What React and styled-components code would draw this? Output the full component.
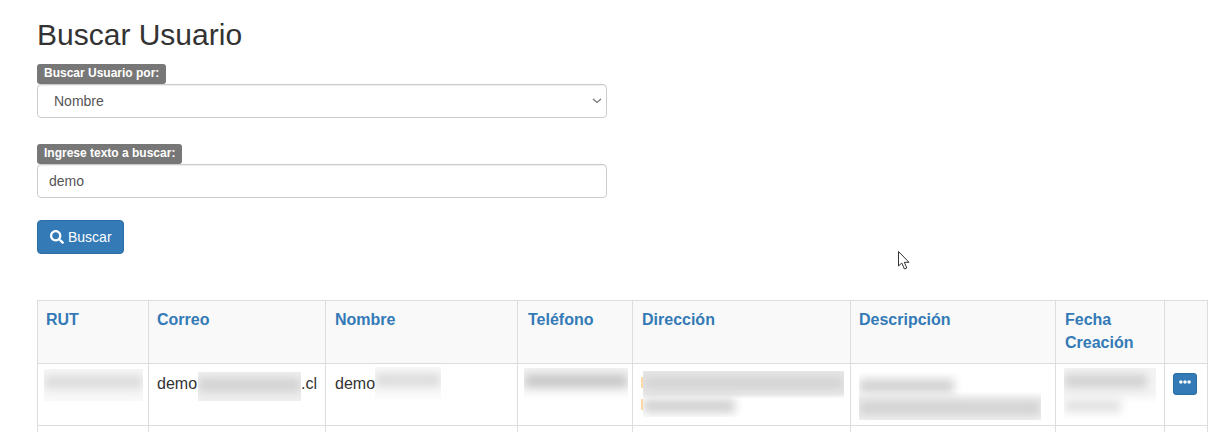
import styled, { createGlobalStyle } from "styled-components";
import { FaSearch, FaEllipsisH } from "react-icons/fa";

const GlobalStyle = createGlobalStyle`
  html, body {
    margin: 0;
    height: 432px;
    overflow: hidden;
    background: #fff;
  }
  body {
    font-family: "Liberation Sans", Arial, sans-serif;
    font-size: 14px;
    line-height: 1.42857;
    color: #333;
  }
  * {
    box-sizing: border-box;
  }
`;

const Page = styled.div`
  position: relative;
  height: 432px;
  padding: 18px 0 0 37px;
  overflow: hidden;
`;

const Title = styled.h2`
  margin: 0 0 13px;
  font-size: 30px;
  font-weight: 500;
  line-height: 33px;
  color: #333;
`;

const Form = styled.form`
  width: 570px;
`;

const Group = styled.div`
  margin-bottom: ${(p) => p.$gap}px;
`;

const Label = styled.label`
  display: table;
  height: 20px;
  padding: 1px 7px 0;
  border-radius: 3px;
  background: #777;
  color: #fff;
  font-size: 12px;
  font-weight: 700;
  line-height: 16px;
`;

const chevron =
  "data:image/svg+xml,%3Csvg xmlns='http://www.w3.org/2000/svg' width='10' height='6'%3E%3Cpath d='M1 1l4 3.5 4-3.5' fill='none' stroke='%23777' stroke-width='1.3'/%3E%3C/svg%3E";

const Select = styled.select`
  display: block;
  width: 100%;
  height: 34px;
  padding: 6px 12px 6px 16px;
  border: 1px solid #ccc;
  border-radius: 4px;
  appearance: none;
  background: #fff url("${chevron}") no-repeat right 4px center;
  color: #555;
  font-family: inherit;
  font-size: 14px;
  box-shadow: inset 0 1px 1px rgba(0, 0, 0, 0.075);
`;

const Input = styled.input`
  display: block;
  width: 100%;
  height: 34px;
  padding: 6px 11px;
  border: 1px solid #ccc;
  border-radius: 4px;
  color: #555;
  font-family: inherit;
  font-size: 14px;
  box-shadow: inset 0 1px 1px rgba(0, 0, 0, 0.075);
`;

const Button = styled.button`
  display: inline-flex;
  align-items: center;
  gap: 4px;
  height: 34px;
  padding: 0 11px 0 12px;
  border: 1px solid #2e6da4;
  border-radius: 4px;
  background: #337ab7;
  color: #fff;
  font-family: inherit;
  font-size: 14px;
`;

const Table = styled.table`
  width: 1170px;
  margin-top: 46px;
  border-collapse: collapse;
  table-layout: fixed;
  color: #333;
`;

const Th = styled.th`
  padding: 7px 8px 9px ${(p) => 8 + (p.$indent || 0)}px;
  border: 1px solid #ddd;
  background: #f9f9f9;
  font-size: 16px;
  font-weight: 700;
  line-height: 23px;
  text-align: left;
  vertical-align: top;
`;

const SortLink = styled.a`
  color: #337ab7;
`;

const Td = styled.td`
  height: 62px;
  padding: 8px 8px 8px ${(p) => 8 + (p.$indent || 0)}px;
  border: 1px solid #ddd;
  font-size: 16px;
  line-height: 23px;
  vertical-align: top;
`;

const Inline = styled.div`
  display: flex;
  align-items: flex-start;
  white-space: nowrap;
`;

// pale patch with a soft smudge inside, hides the private data
const Patch = styled.div`
  flex: none;
  width: ${(p) => p.$w}px;
  height: ${(p) => p.$h}px;
  margin: ${(p) => p.$top}px 0 -20px ${(p) => p.$left}px;
  padding-top: ${(p) => p.$pad || 6}px;
  overflow: hidden;
  background: ${(p) => p.$bg || "#f5f5f5"};
`;

const Smudge = styled.div`
  width: ${(p) => p.$w}%;
  height: ${(p) => p.$h || 14}px;
  margin-bottom: ${(p) => p.$gap || 8}px;
  background: ${(p) => p.$color || "#d2d2d2"};
  filter: blur(5px);
`;

const Slivers = styled.div`
  flex: none;
  width: 2px;
  margin-top: 5px;
`;

const Sliver = styled.div`
  height: 11px;
  margin-bottom: 11px;
  background: #fbd9a0;
  &:last-child {
    margin-bottom: 0;
  }
`;

const MoreButton = styled.button`
  display: flex;
  align-items: center;
  justify-content: center;
  width: 24px;
  height: 22px;
  margin: 1px 0 0;
  padding: 0 0 4px;
  border: 1px solid #2e6da4;
  border-radius: 3px;
  background: #337ab7;
  color: #fff;
  font-size: 12px;
`;

const Cursor = styled.svg`
  position: absolute;
  left: 897px;
  top: 250px;
`;

const columns = [
  { title: "RUT", width: 111 },
  { title: "Correo", width: 177 },
  { title: "Nombre", width: 192, indent: 1 },
  { title: "Teléfono", width: 115, indent: 2 },
  { title: "Dirección", width: 218, indent: 1 },
  { title: "Descripción", width: 205 },
  { title: "Fecha Creación", width: 109, indent: 1 },
  { title: "", width: 43 },
];

const App = () => {
  return (
    <Page>
      <GlobalStyle />
      <Title>Buscar Usuario</Title>
      <Form>
        <Group $gap={26}>
          <Label>Buscar Usuario por:</Label>
          <Select defaultValue="Nombre">
            <option>Nombre</option>
            <option>RUT</option>
            <option>Correo</option>
          </Select>
        </Group>
        <Group $gap={22}>
          <Label>Ingrese texto a buscar:</Label>
          <Input defaultValue="demo" />
        </Group>
        <Button type="button">
          <FaSearch size={14} />
          Buscar
        </Button>
      </Form>

      <Table>
        <colgroup>
          {columns.map((col) => (
            <col key={col.title} style={{ width: col.width }} />
          ))}
        </colgroup>
        <thead>
          <tr>
            {columns.map((col) => (
              <Th key={col.title} $indent={col.indent}>
                <SortLink>{col.title}</SortLink>
              </Th>
            ))}
          </tr>
        </thead>
        <tbody>
          <tr>
            <Td>
              <Patch $w={99} $h={32} $top={-3} $left={-2} $bg="#f8f8f8">
                <Smudge $w={100} $color="#dcdcdc" />
              </Patch>
            </Td>
            <Td>
              <Inline>
                demo
                <Patch $w={103} $h={29} $top={0} $left={1} $bg="#efefef">
                  <Smudge $w={100} />
                </Patch>
                .cl
              </Inline>
            </Td>
            <Td $indent={1}>
              <Inline>
                demo
                <Patch $w={66} $h={32} $top={-5} $left={0} $bg="#fafafa">
                  <Smudge $w={100} $color="#dcdcdc" />
                </Patch>
              </Inline>
            </Td>
            <Td>
              <Patch
                $w={104}
                $h={34}
                $top={-4}
                $left={-2}
                $pad={6}
                $bg="linear-gradient(#f4f4f4, #ffffff)"
              >
                <Smudge $w={100} $color="#c8c8c8" />
              </Patch>
            </Td>
            <Td>
              <Inline>
                <Slivers>
                  <Sliver />
                  <Sliver />
                </Slivers>
                <Patch
                  $w={201}
                  $h={46}
                  $top={-1}
                  $left={0}
                  $bg="linear-gradient(#e8e8e8 50%, #ffffff 60%)"
                >
                  <Smudge $w={100} $h={12} $gap={10} />
                  <Smudge $w={46} $h={14} />
                </Patch>
              </Inline>
            </Td>
            <Td>
              <Patch
                $w={182}
                $h={47}
                $top={1}
                $left={0}
                $bg="linear-gradient(#ffffff 40%, #efefef 55%)"
              >
                <Smudge $w={52} $h={14} $gap={8} />
                <Smudge $w={100} $h={14} />
              </Patch>
            </Td>
            <Td>
              <Patch
                $w={92}
                $h={51}
                $top={-4}
                $left={0}
                $bg="linear-gradient(#f4f4f4 50%, #ffffff 70%)"
              >
                <Smudge $w={90} $h={14} $gap={12} />
                <Smudge $w={62} $h={12} $color="#e0e0e0" />
              </Patch>
            </Td>
            <Td>
              <MoreButton type="button">
                <FaEllipsisH />
              </MoreButton>
            </Td>
          </tr>
          <tr>
            {columns.map((col) => (
              <Td key={col.title} />
            ))}
          </tr>
        </tbody>
      </Table>

      <Cursor width="14" height="21" viewBox="0 0 14 21">
        <path
          d="M1.5 1.5 V16 L4.8 13 L7.4 19 L9.8 18 L7.3 12.3 H12 Z"
          fill="#fff"
          stroke="#333"
          strokeWidth="1"
        />
      </Cursor>
    </Page>
  );
};

export default App;
